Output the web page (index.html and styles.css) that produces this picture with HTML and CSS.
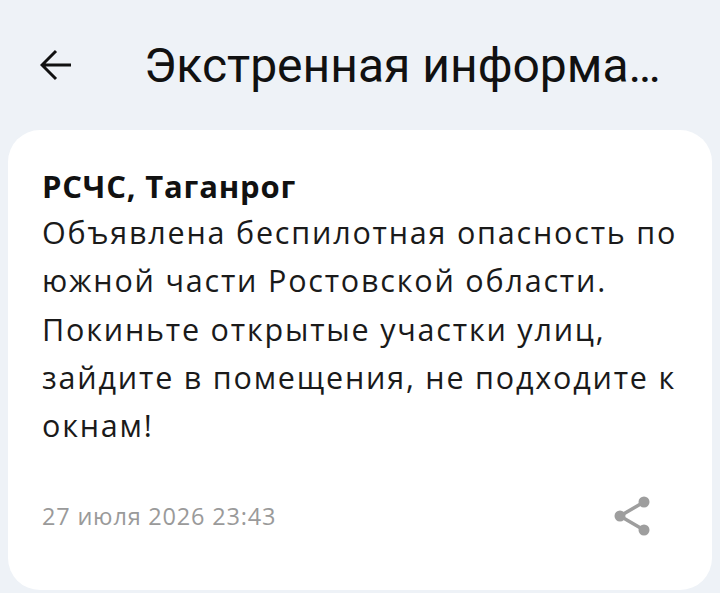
FILE: index.html
```html
<!DOCTYPE html>
<html lang="ru">
<head>
  <meta charset="UTF-8">
  <meta name="viewport" content="width=device-width, initial-scale=1.0">
  <title>Экстренная информация</title>
  <link rel="stylesheet" href="styles.css">
</head>
<body>
  <!-- Top bar -->
  <header class="top-bar">
    <button class="back-button" aria-label="Назад">
      <svg viewBox="0 0 32 32" width="32" height="32">
        <path d="M31 16H3M16 2L2 16l14 14" fill="none" stroke="#111" stroke-width="3"/>
      </svg>
    </button>
    <h1 class="title">Экстренная информа…</h1>
  </header>

  <!-- Message card -->
  <main class="card">
    <p class="sender">РСЧС, Таганрог</p>
    <p class="message">Объявлена беспилотная опасность по южной части Ростовской области. Покиньте открытые участки улиц, зайдите в помещения, не подходите к окнам!</p>

    <div class="card-footer">
      <span class="date">27 июля 2026 23:43</span>
      <button class="share-button" aria-label="Поделиться">
        <svg viewBox="0 0 36 40" width="36" height="40">
          <path d="M30 6L6 20l24 14" fill="none" stroke="#9e9e9e" stroke-width="3.5"/>
          <circle cx="30" cy="6" r="5.5" fill="#9e9e9e"/>
          <circle cx="6" cy="20" r="5.5" fill="#9e9e9e"/>
          <circle cx="30" cy="34" r="5.5" fill="#9e9e9e"/>
        </svg>
      </button>
    </div>
  </main>
</body>
</html>
```

FILE: styles.css
```css
body {
  margin: 0;
  background-color: #eef2f7;
  font-family: "Open Sans", "Noto Sans", sans-serif;
  color: #111;
}

.top-bar {
  display: flex;
  align-items: center;
  height: 130px;
  padding-left: 40px;
  box-sizing: border-box;
}

.back-button {
  display: flex;
  padding: 0;
  border: none;
  background: none;
}

.title {
  margin: 0 0 0 72px;
  font-family: Roboto, "Noto Sans", sans-serif;
  font-size: 48px;
  font-weight: 400;
  color: #111;
  white-space: nowrap;
}

.card {
  display: block;
  margin: 0 8px;
  padding: 34px 20px 40px 34px;
  min-height: 460px;
  box-sizing: border-box;
  background-color: #ffffff;
  border-radius: 32px;
}

.sender {
  margin: 0;
  font-size: 31px;
  font-weight: 700;
  line-height: 44px;
  letter-spacing: 0.8px;
}

.message {
  margin: 0;
  font-size: 30.5px;
  line-height: 48.3px;
  letter-spacing: 1.8px;
  color: #1a1a1a;
}

.card-footer {
  display: flex;
  align-items: center;
  justify-content: space-between;
  margin-top: 47px;
}

.date {
  font-size: 23.5px;
  letter-spacing: 0.8px;
  color: #9a9a9a;
}

.share-button {
  display: flex;
  margin-right: 42px;
  padding: 0;
  border: none;
  background: none;
}
```
